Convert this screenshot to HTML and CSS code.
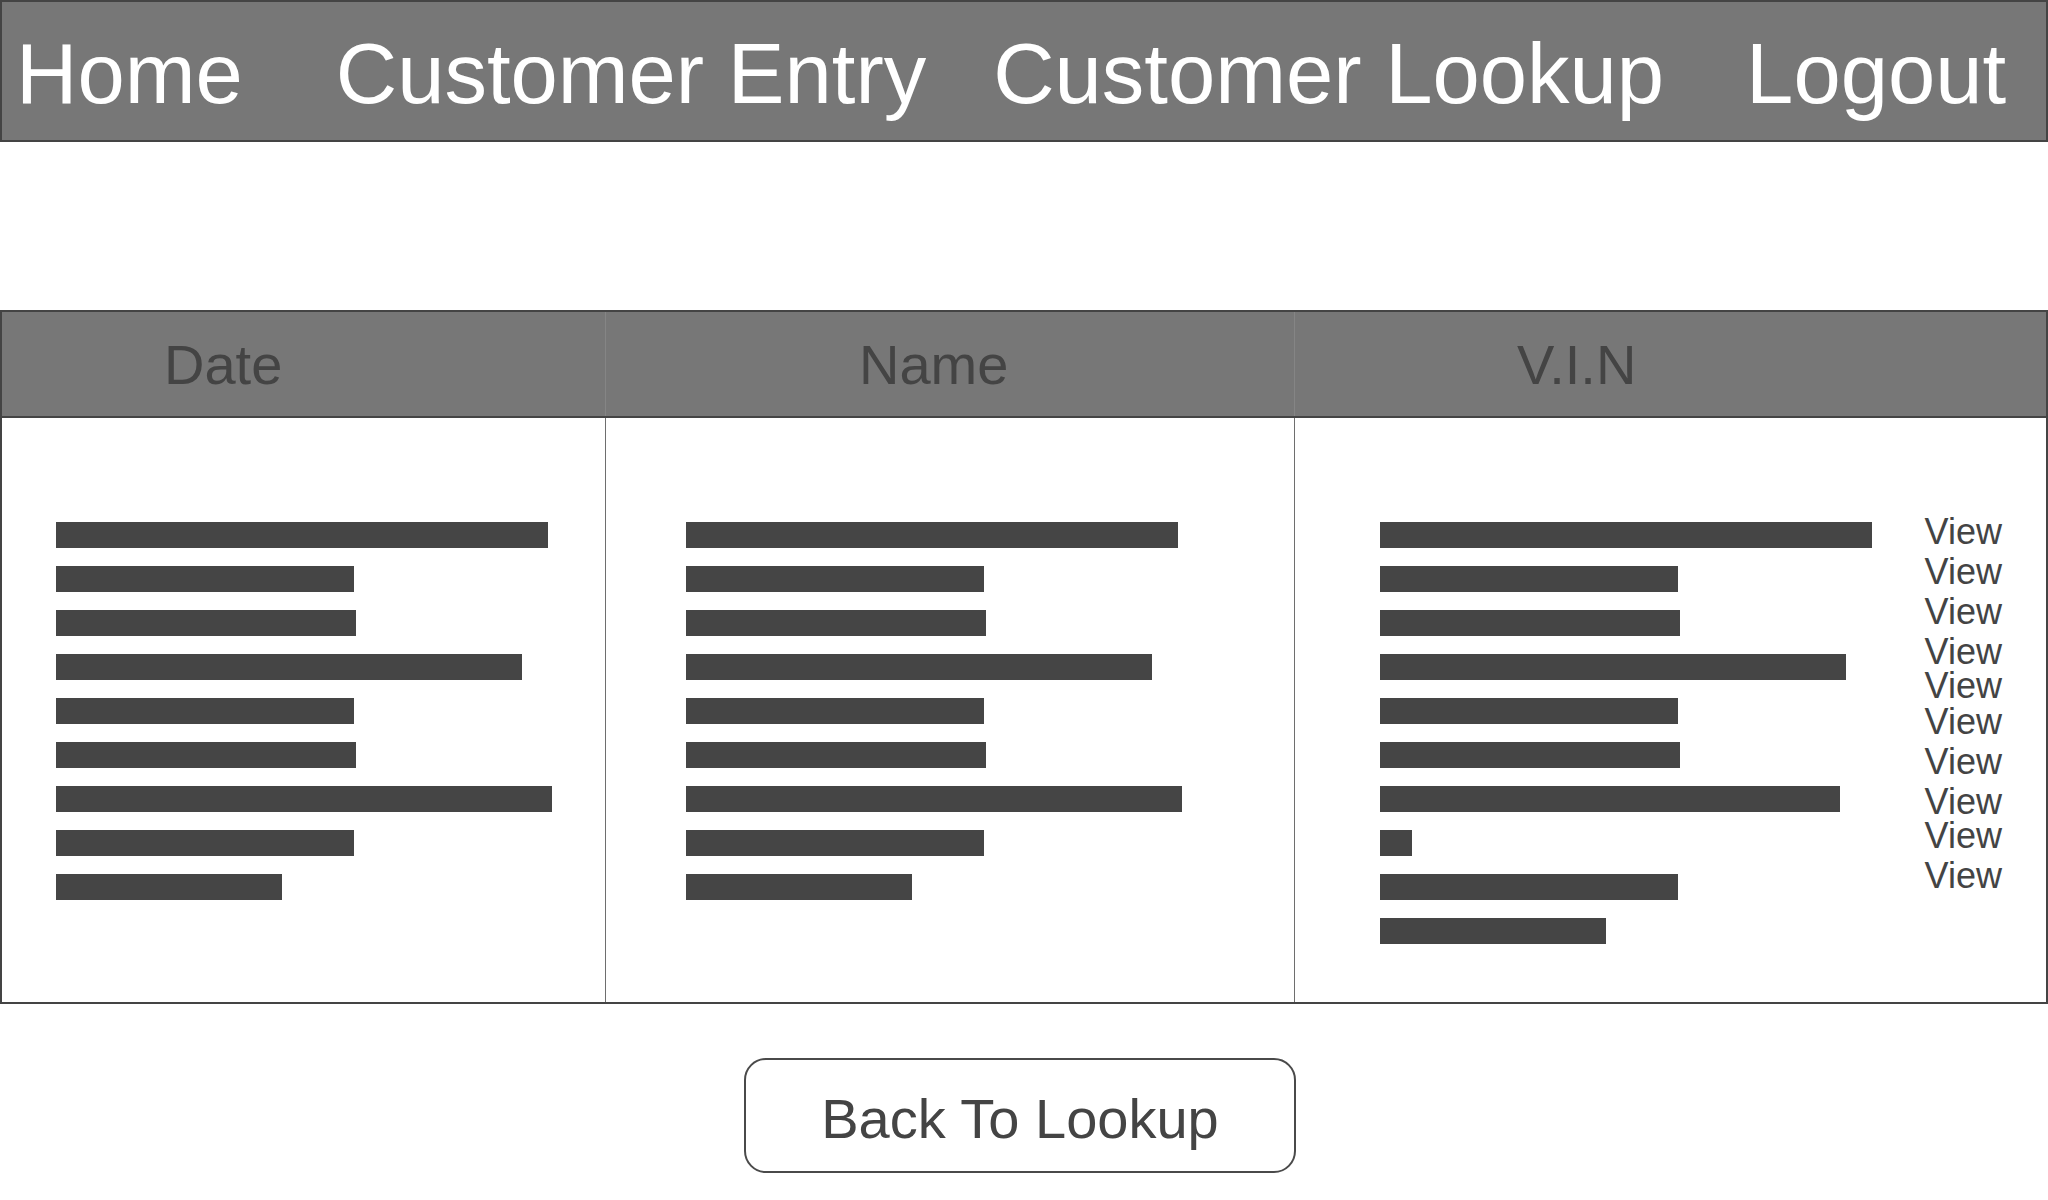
FILE: index.html
```html
<!DOCTYPE html>
<html>
<head>
<meta charset="utf-8">
<link rel="stylesheet" href="styles.css">
</head>
<body>
<nav class="nav">
  <a class="nav-link nav-home">Home</a>
  <a class="nav-link nav-entry">Customer Entry</a>
  <a class="nav-link nav-lookup">Customer Lookup</a>
  <a class="nav-link nav-logout">Logout</a>
</nav>

<section class="table">
  <div class="thead">
    <div class="th th-date">Date</div>
    <div class="th th-name">Name</div>
    <div class="th th-vin">V.I.N</div>
  </div>
  <div class="tbody">
    <div class="col col-date">
      <div class="bars">
        <div class="bar" style="width:492px"></div>
        <div class="bar" style="width:298px"></div>
        <div class="bar" style="width:300px"></div>
        <div class="bar" style="width:466px"></div>
        <div class="bar" style="width:298px"></div>
        <div class="bar" style="width:300px"></div>
        <div class="bar" style="width:496px"></div>
        <div class="bar" style="width:298px"></div>
        <div class="bar" style="width:226px"></div>
      </div>
    </div>
    <div class="col col-name">
      <div class="bars">
        <div class="bar" style="width:492px"></div>
        <div class="bar" style="width:298px"></div>
        <div class="bar" style="width:300px"></div>
        <div class="bar" style="width:466px"></div>
        <div class="bar" style="width:298px"></div>
        <div class="bar" style="width:300px"></div>
        <div class="bar" style="width:496px"></div>
        <div class="bar" style="width:298px"></div>
        <div class="bar" style="width:226px"></div>
      </div>
    </div>
    <div class="col col-vin">
      <div class="bars">
        <div class="bar" style="width:492px"></div>
        <div class="bar" style="width:298px"></div>
        <div class="bar" style="width:300px"></div>
        <div class="bar" style="width:466px"></div>
        <div class="bar" style="width:298px"></div>
        <div class="bar" style="width:300px"></div>
        <div class="bar" style="width:460px"></div>
        <div class="bar" style="width:32px"></div>
        <div class="bar" style="width:298px"></div>
        <div class="bar" style="width:226px"></div>
      </div>
      <div class="views">
        <a class="view">View</a>
        <a class="view">View</a>
        <a class="view">View</a>
        <a class="view">View</a>
        <a class="view view-up6">View</a>
        <a class="view view-up4">View</a>
        <a class="view">View</a>
        <a class="view">View</a>
        <a class="view view-up6">View</a>
        <a class="view">View</a>
      </div>
    </div>
  </div>
</section>

<div class="actions">
  <button class="back-btn">Back To Lookup</button>
</div>
</body>
</html>
```

FILE: styles.css
```css
* {
  box-sizing: border-box;
}

html, body {
  margin: 0;
  padding: 0;
  background: #ffffff;
}

body {
  width: 2048px;
  font-family: "Liberation Sans", Arial, sans-serif;
  color: #444444;
}

/* ---------- top navigation ---------- */
.nav {
  height: 142px;
  background: #777777;
  border: 2px solid #444444;
  display: flex;
  align-items: center;
  padding-top: 4px;
}

.nav-link {
  color: #ffffff;
  font-size: 85px;
  line-height: 1;
  white-space: nowrap;
}

.nav-home { margin-left: 14px; }
.nav-entry { margin-left: 93px; }
.nav-lookup { margin-left: 67px; }
.nav-logout { margin-left: 82px; }

/* ---------- table ---------- */
.table {
  margin-top: 168px;
  border: 2px solid #444444;
}

.thead {
  display: grid;
  grid-template-columns: 603px 689px 1fr;
  height: 106px;
  background: #777777;
  border-bottom: 2px solid #444444;
}

.th {
  display: flex;
  align-items: center;
  font-size: 56px;
  line-height: 1;
  color: #444444;
  padding-top: 2px;
}

.th-date { padding-left: 162px; }
.th-name { padding-left: 253px; border-left: 1px solid #858585; }
.th-vin { padding-left: 222px; border-left: 1px solid #858585; }

.tbody {
  display: grid;
  grid-template-columns: 603px 689px 1fr;
  height: 584px;
}

.col {
  display: flex;
  align-items: flex-start;
}

.col-name,
.col-vin {
  border-left: 1px solid #6e6e6e;
}

.col-date { padding-left: 54px; }
.col-name { padding-left: 80px; }
.col-vin {
  padding-left: 85px;
  padding-right: 44px;
  justify-content: space-between;
}

.bars {
  display: flex;
  flex-direction: column;
  gap: 18px;
  padding-top: 104px;
}

.bar {
  height: 26px;
  background: #454545;
}

.views {
  display: flex;
  flex-direction: column;
  padding-top: 94px;
}

.view {
  font-size: 36px;
  line-height: 40px;
  color: #444444;
}

.view-up6 { margin-top: -6px; }
.view-up4 { margin-top: -4px; }

/* ---------- action button ---------- */
.actions {
  display: flex;
  padding-left: 744px;
  margin-top: 54px;
}

.back-btn {
  width: 552px;
  height: 115px;
  border: 2px solid #4a4a4a;
  border-radius: 22px;
  background: #ffffff;
  font-family: "Liberation Sans", Arial, sans-serif;
  font-size: 56px;
  line-height: 1;
  color: #444444;
  padding: 6px 0 0 0;
}
```
